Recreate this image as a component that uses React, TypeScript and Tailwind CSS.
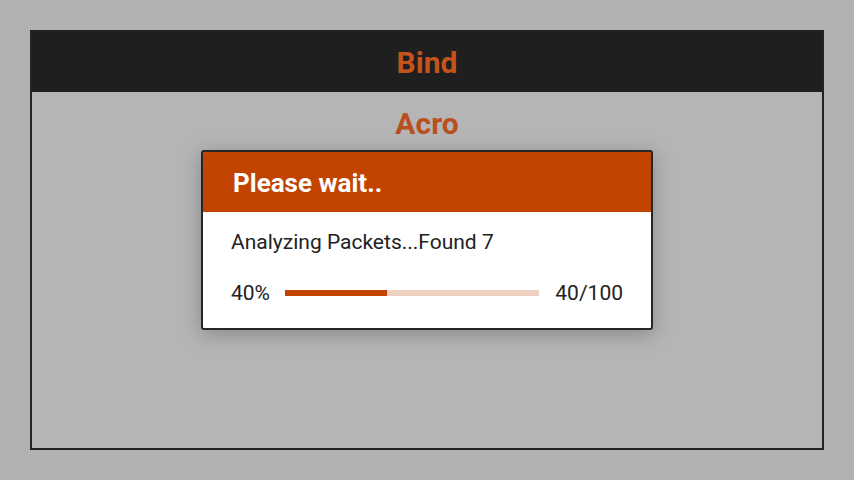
export default function App() {
  const progress = 40;
  return (
    <div className="w-[854px] h-[480px] bg-[#b1b1b1] p-[30px] font-['Roboto',sans-serif]">
      <div className="relative h-full border-2 border-[#222222] bg-[#b5b5b5] flex flex-col">
        <div className="h-[60px] bg-[#1f1f1f] flex items-center justify-center">
          <span className="text-[#c4541c] text-[30px] font-bold leading-[40px] mt-[2px]">Bind</span>
        </div>
        <div className="flex justify-center pt-[12px]">
          <span className="text-[#b94f1c] text-[30px] font-bold leading-[40px]">Acro</span>
        </div>

        {/* Dialog */}
        <div className="absolute left-[169px] top-[118px] w-[452px] border-2 border-[#262626] rounded-[3px] bg-white shadow-[0_4px_20px_rgba(0,0,0,0.25)] overflow-hidden">
          <div className="h-[60px] bg-[#c24400] flex items-center pl-[30px]">
            <span className="text-white text-[26px] font-bold leading-[32px] mt-[2px]">Please wait..</span>
          </div>
          <div className="px-[28px] pt-[16px] pb-[22px] text-[#222222]">
            <div className="text-[21px] leading-[28px]">Analyzing Packets...Found 7</div>
            <div className="flex items-center mt-[24px] text-[21px] leading-[26px]">
              <span className="w-[54px]">40%</span>
              <div className="w-[254px] h-[6px] bg-[#eed0c0]">
                <div className="h-full bg-[#c24400]" style={{ width: `${progress}%` }} />
              </div>
              <span className="ml-auto">40/100</span>
            </div>
          </div>
        </div>
      </div>
    </div>
  );
}
